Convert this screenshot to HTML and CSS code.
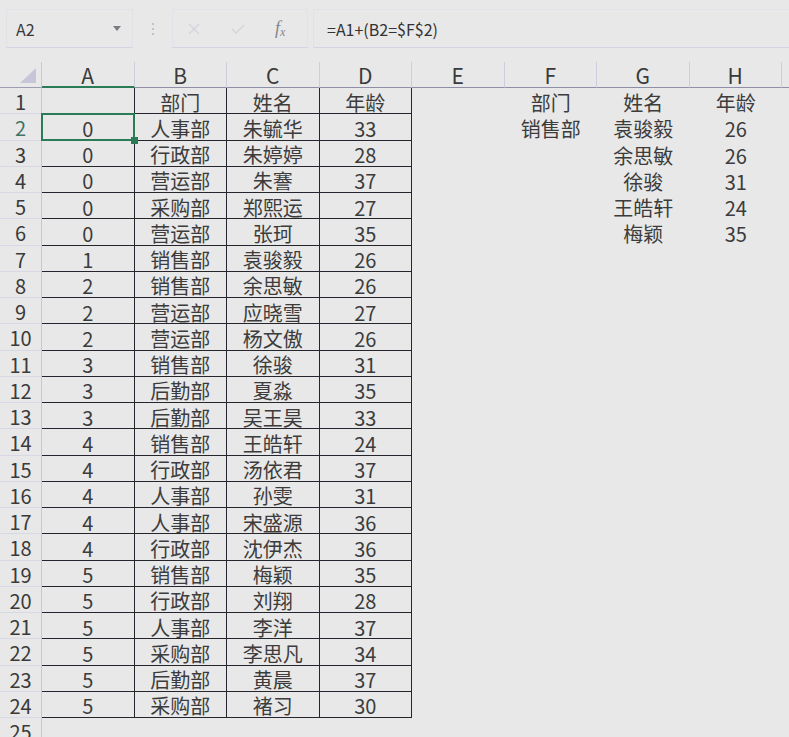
FILE: index.html
```html
<!DOCTYPE html>
<html lang="zh-CN">
<head>
<meta charset="utf-8">
<title>Sheet</title>
<link rel="stylesheet" href="styles.css">
</head>
<body>
<div class="fbar">
  <div class="namebox">A2<span class="drop"></span></div>
  <div class="dots"><i></i><i></i><i></i></div>
  <div class="btnbox">
    <svg class="ico x" width="12" height="12" viewBox="0 0 12 12"><path d="M1 1L11 11M11 1L1 11" stroke="#d3d3dc" stroke-width="1.3" fill="none"/></svg>
    <svg class="ico ok" width="14" height="10" viewBox="0 0 14 10"><path d="M1 5L5 9L13 1" stroke="#d3d3dc" stroke-width="1.3" fill="none"/></svg>
    <span class="fx">f<sub>x</sub></span>
  </div>
  <div class="formula">=A1+(B2=$F$2)</div>
</div>
<div class="sheet">
  <div class="corner"><span class="tri"></span></div><div class="ch cha">A</div><div class="ch">B</div><div class="ch">C</div><div class="ch">D</div><div class="ch">E</div><div class="ch">F</div><div class="ch">G</div><div class="ch">H</div><div class="ch chi"></div>

  <div class="rh">1</div><div class="c t"></div><div class="c t">部门</div><div class="c t">姓名</div><div class="c t">年龄</div><div class="c"></div><div class="c">部门</div><div class="c">姓名</div><div class="c">年龄</div><div class="c"></div>
  <div class="rh rsel">2</div><div class="c t a2">0<span class="sel"></span></div><div class="c t">人事部</div><div class="c t">朱毓华</div><div class="c t">33</div><div class="c"></div><div class="c">销售部</div><div class="c">袁骏毅</div><div class="c">26</div><div class="c"></div>
  <div class="rh">3</div><div class="c t">0</div><div class="c t">行政部</div><div class="c t">朱婷婷</div><div class="c t">28</div><div class="c"></div><div class="c"></div><div class="c">余思敏</div><div class="c">26</div><div class="c"></div>
  <div class="rh">4</div><div class="c t">0</div><div class="c t">营运部</div><div class="c t">朱謇</div><div class="c t">37</div><div class="c"></div><div class="c"></div><div class="c">徐骏</div><div class="c">31</div><div class="c"></div>
  <div class="rh">5</div><div class="c t">0</div><div class="c t">采购部</div><div class="c t">郑熙运</div><div class="c t">27</div><div class="c"></div><div class="c"></div><div class="c">王皓轩</div><div class="c">24</div><div class="c"></div>
  <div class="rh">6</div><div class="c t">0</div><div class="c t">营运部</div><div class="c t">张珂</div><div class="c t">35</div><div class="c"></div><div class="c"></div><div class="c">梅颖</div><div class="c">35</div><div class="c"></div>
  <div class="rh">7</div><div class="c t">1</div><div class="c t">销售部</div><div class="c t">袁骏毅</div><div class="c t">26</div><div class="c"></div><div class="c"></div><div class="c"></div><div class="c"></div><div class="c"></div>
  <div class="rh">8</div><div class="c t">2</div><div class="c t">销售部</div><div class="c t">余思敏</div><div class="c t">26</div><div class="c"></div><div class="c"></div><div class="c"></div><div class="c"></div><div class="c"></div>
  <div class="rh">9</div><div class="c t">2</div><div class="c t">营运部</div><div class="c t">应晓雪</div><div class="c t">27</div><div class="c"></div><div class="c"></div><div class="c"></div><div class="c"></div><div class="c"></div>
  <div class="rh">10</div><div class="c t">2</div><div class="c t">营运部</div><div class="c t">杨文傲</div><div class="c t">26</div><div class="c"></div><div class="c"></div><div class="c"></div><div class="c"></div><div class="c"></div>
  <div class="rh">11</div><div class="c t">3</div><div class="c t">销售部</div><div class="c t">徐骏</div><div class="c t">31</div><div class="c"></div><div class="c"></div><div class="c"></div><div class="c"></div><div class="c"></div>
  <div class="rh">12</div><div class="c t">3</div><div class="c t">后勤部</div><div class="c t">夏淼</div><div class="c t">35</div><div class="c"></div><div class="c"></div><div class="c"></div><div class="c"></div><div class="c"></div>
  <div class="rh">13</div><div class="c t">3</div><div class="c t">后勤部</div><div class="c t">吴王昊</div><div class="c t">33</div><div class="c"></div><div class="c"></div><div class="c"></div><div class="c"></div><div class="c"></div>
  <div class="rh">14</div><div class="c t">4</div><div class="c t">销售部</div><div class="c t">王皓轩</div><div class="c t">24</div><div class="c"></div><div class="c"></div><div class="c"></div><div class="c"></div><div class="c"></div>
  <div class="rh">15</div><div class="c t">4</div><div class="c t">行政部</div><div class="c t">汤依君</div><div class="c t">37</div><div class="c"></div><div class="c"></div><div class="c"></div><div class="c"></div><div class="c"></div>
  <div class="rh">16</div><div class="c t">4</div><div class="c t">人事部</div><div class="c t">孙雯</div><div class="c t">31</div><div class="c"></div><div class="c"></div><div class="c"></div><div class="c"></div><div class="c"></div>
  <div class="rh">17</div><div class="c t">4</div><div class="c t">人事部</div><div class="c t">宋盛源</div><div class="c t">36</div><div class="c"></div><div class="c"></div><div class="c"></div><div class="c"></div><div class="c"></div>
  <div class="rh">18</div><div class="c t">4</div><div class="c t">行政部</div><div class="c t">沈伊杰</div><div class="c t">36</div><div class="c"></div><div class="c"></div><div class="c"></div><div class="c"></div><div class="c"></div>
  <div class="rh">19</div><div class="c t">5</div><div class="c t">销售部</div><div class="c t">梅颖</div><div class="c t">35</div><div class="c"></div><div class="c"></div><div class="c"></div><div class="c"></div><div class="c"></div>
  <div class="rh">20</div><div class="c t">5</div><div class="c t">行政部</div><div class="c t">刘翔</div><div class="c t">28</div><div class="c"></div><div class="c"></div><div class="c"></div><div class="c"></div><div class="c"></div>
  <div class="rh">21</div><div class="c t">5</div><div class="c t">人事部</div><div class="c t">李洋</div><div class="c t">37</div><div class="c"></div><div class="c"></div><div class="c"></div><div class="c"></div><div class="c"></div>
  <div class="rh">22</div><div class="c t">5</div><div class="c t">采购部</div><div class="c t">李思凡</div><div class="c t">34</div><div class="c"></div><div class="c"></div><div class="c"></div><div class="c"></div><div class="c"></div>
  <div class="rh">23</div><div class="c t">5</div><div class="c t">后勤部</div><div class="c t">黄晨</div><div class="c t">37</div><div class="c"></div><div class="c"></div><div class="c"></div><div class="c"></div><div class="c"></div>
  <div class="rh">24</div><div class="c t">5</div><div class="c t">采购部</div><div class="c t">褚习</div><div class="c t">30</div><div class="c"></div><div class="c"></div><div class="c"></div><div class="c"></div><div class="c"></div>
  <div class="rh">25</div><div class="c"></div><div class="c"></div><div class="c"></div><div class="c"></div><div class="c"></div><div class="c"></div><div class="c"></div><div class="c"></div><div class="c"></div>
</div>
</body>
</html>
```

FILE: styles.css
```css
* { box-sizing: border-box; margin: 0; padding: 0; }
html, body { width: 789px; height: 737px; overflow: hidden; }
body {
  background: #e8e8e8;
  font-family: "Noto Sans CJK SC", "Noto Sans", sans-serif;
  color: #3c3c3c;
}

/* formula bar */
.fbar {
  height: 62px;
  display: flex;
  align-items: flex-start;
  padding-top: 9px;
}
.namebox {
  position: relative;
  margin-left: 6px;
  width: 127px;
  height: 39px;
  border: 1px solid #e1e1e7;
  border-bottom-color: #d3d3e3;
  display: flex;
  align-items: center;
  padding-left: 9px;
  font-size: 16px;
  color: #3a3a3a;
}
.drop {
  position: absolute;
  right: 11px;
  top: 16px;
  width: 0; height: 0;
  border-left: 4px solid transparent;
  border-right: 4px solid transparent;
  border-top: 5px solid #7a7a80;
}
.dots {
  width: 39px;
  height: 39px;
  display: flex;
  flex-direction: column;
  align-items: center;
  justify-content: center;
  gap: 3px;
}
.dots i { display: block; width: 2px; height: 2px; background: #c2c2c8; }
.btnbox {
  width: 136px;
  height: 39px;
  border: 1px solid #e1e1e7;
  border-bottom-color: #d3d3e3;
  display: flex;
  align-items: center;
  padding-left: 15px;
}
.ico.x { margin-right: 31px; }
.ico.ok { margin-right: 30px; }
.fx {
  font-family: "Liberation Serif", serif;
  font-style: italic;
  font-size: 18px;
  color: #85858c;
}
.fx sub { font-size: 12px; vertical-align: -2px; }
.formula {
  margin-left: 5px;
  flex: 1;
  height: 39px;
  border: 1px solid #e1e1e7;
  border-right: none;
  border-bottom-color: #d3d3e3;
  display: flex;
  align-items: center;
  padding-left: 13px;
  font-size: 16px;
  color: #333;
}

/* sheet */
.sheet {
  display: grid;
  grid-template-columns: 42px repeat(8, 92.5px) 1fr;
  grid-template-rows: 26px repeat(25, 26.25px);
}
.corner {
  position: relative;
  border-right: 1px solid #c8c8da;
  border-bottom: 1px solid #9c9cb2;
}
.tri {
  position: absolute;
  right: 5px;
  bottom: 4px;
  width: 0; height: 0;
  border-left: 16px solid transparent;
  border-bottom: 15px solid #c6c6d8;
}
.ch {
  display: flex;
  align-items: center;
  justify-content: center;
  font-size: 21px;
  color: #3a3a3a;
  border-right: 1px solid #cdcddd;
  border-bottom: 1px solid #8e8ea6;
  padding-top: 1px;
}
.cha { border-bottom: 2px solid #2b7b57; }
.chi { border-right: none; }
.rh {
  display: flex;
  align-items: center;
  justify-content: center;
  font-size: 20px;
  color: #3a3a3a;
  border-right: 1px solid #c6c6d8;
  border-bottom: 1px solid #d7d7e5;
  padding-top: 2px;
}
.rsel { color: #3c7468; }
.c {
  display: flex;
  align-items: center;
  justify-content: center;
  font-size: 20px;
  padding-top: 3px;
  white-space: nowrap;
}
.t {
  border-right: 1px solid #25252e;
  border-bottom: 1px solid #25252e;
}
.a2 { position: relative; }
.sel {
  position: absolute;
  left: -1px;
  top: -1px;
  right: -1px;
  bottom: -1px;
  border: 2px solid #2b7b57;
}
.sel::after {
  content: "";
  position: absolute;
  right: -5px;
  bottom: -5px;
  width: 7px;
  height: 7px;
  background: #2b7b57;
}
```
